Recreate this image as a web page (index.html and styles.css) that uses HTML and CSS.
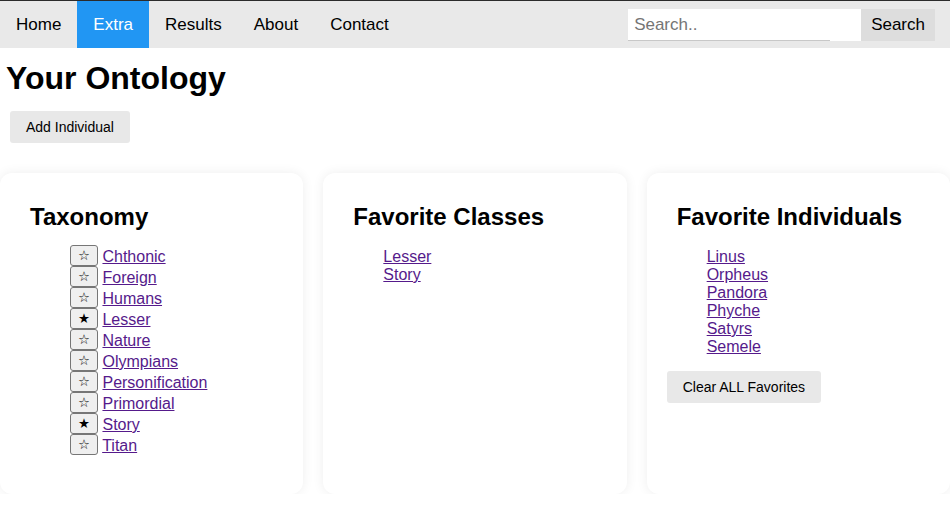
FILE: index.html
```html
<!DOCTYPE html>
<html>
<head>
<meta charset="utf-8">
<title>Your Ontology</title>
<link rel="stylesheet" href="styles.css">
</head>
<body>
<nav class="topnav">
  <div class="links">
    <a href="#">Home</a>
    <a href="#" class="active">Extra</a>
    <a href="#">Results</a>
    <a href="#">About</a>
    <a href="#">Contact</a>
  </div>
  <form class="search-container">
    <input type="text" class="search-input" placeholder="Search..">
    <button type="button" class="search-btn">Search</button>
  </form>
</nav>
<h1 class="title">Your Ontology</h1>
<div class="actions">
  <button class="btn">Add Individual</button>
</div>
<div class="cards">
  <section class="card">
    <h2 class="card-title">Taxonomy</h2>
    <ul class="list tax">
      <li><button class="star">☆</button> <a href="#">Chthonic</a></li>
      <li><button class="star">☆</button> <a href="#">Foreign</a></li>
      <li><button class="star">☆</button> <a href="#">Humans</a></li>
      <li><button class="star on">★</button> <a href="#">Lesser</a></li>
      <li><button class="star">☆</button> <a href="#">Nature</a></li>
      <li><button class="star">☆</button> <a href="#">Olympians</a></li>
      <li><button class="star">☆</button> <a href="#">Personification</a></li>
      <li><button class="star">☆</button> <a href="#">Primordial</a></li>
      <li><button class="star on">★</button> <a href="#">Story</a></li>
      <li><button class="star">☆</button> <a href="#">Titan</a></li>
    </ul>
  </section>
  <section class="card">
    <h2 class="card-title">Favorite Classes</h2>
    <ul class="list">
      <li><a href="#">Lesser</a></li>
      <li><a href="#">Story</a></li>
    </ul>
  </section>
  <section class="card">
    <h2 class="card-title">Favorite Individuals</h2>
    <ul class="list fav">
      <li><a href="#">Linus</a></li>
      <li><a href="#">Orpheus</a></li>
      <li><a href="#">Pandora</a></li>
      <li><a href="#">Phyche</a></li>
      <li><a href="#">Satyrs</a></li>
      <li><a href="#">Semele</a></li>
    </ul>
    <button class="btn">Clear ALL Favorites</button>
  </section>
</div>
</body>
</html>
```
FILE: styles.css
```css
html, body {
  margin: 0;
  padding: 0;
  background: #ffffff;
  font-family: "Liberation Sans", Arial, sans-serif;
  color: #000;
}

.topnav {
  display: flex;
  justify-content: space-between;
  align-items: flex-start;
  background: #e9e9e9;
  border-top: 1px solid #2b2b2b;
  height: 47px;
}

.links {
  display: flex;
}

.links a {
  display: block;
  color: #000;
  text-decoration: none;
  font-size: 17px;
  padding: 14px 16px;
  line-height: 19px;
}

.links a.active {
  background: #2196f3;
  color: #fff;
}

.search-container {
  display: flex;
  margin: 8px 15px 0 0;
}

.search-input {
  width: 233px;
  height: 32px;
  box-sizing: border-box;
  border: none;
  outline: none;
  padding: 6px;
  font-size: 17px;
  font-family: "Liberation Sans", Arial, sans-serif;
  background: linear-gradient(#c8c8c8, #c8c8c8) no-repeat 0 100% / 202px 1px, #fff;
}

.search-input::placeholder {
  color: #757575;
}

.search-btn {
  height: 32px;
  padding: 0 10px;
  border: none;
  background: #ddd;
  font-size: 17px;
  font-family: "Liberation Sans", Arial, sans-serif;
  color: #000;
}

.title {
  margin: 12px 0 0 6px;
  font-size: 32px;
  font-weight: bold;
}

.actions {
  padding: 14px 10px 0;
}

.btn {
  display: block;
  border: none;
  border-radius: 3px;
  background: #e8e8e8;
  color: #000;
  font-family: "Liberation Sans", Arial, sans-serif;
  font-size: 14px;
  line-height: 16px;
  padding: 8px 16px;
}

.cards {
  display: flex;
  gap: 20px;
  margin-top: 30px;
  align-items: stretch;
}

.card {
  flex: 1;
  background: #fff;
  border-radius: 12px;
  box-shadow: 0 0 12px rgba(0, 0, 0, 0.07);
  padding: 20px;
}

.card-title {
  margin: 10px 0 0 10px;
  font-size: 24px;
  font-weight: bold;
}

.list {
  list-style: none;
  margin: 17px 0 16px;
  padding-left: 40px;
  font-size: 16px;
}

.list.tax {
  padding-left: 50px;
  margin: 14px 0 19px;
}

.list.fav {
  margin-bottom: 15px;
}

.list a {
  color: #551a8b;
}

.star {
  font-family: "DejaVu Sans", "Liberation Sans", sans-serif;
  font-size: 13.33px;
  line-height: 15px;
  width: 28px;
  height: 21px;
  padding: 0;
  border: 1px solid #767676;
  border-radius: 3px;
  background: #efefef;
  color: #000;
  vertical-align: bottom;
}
```
